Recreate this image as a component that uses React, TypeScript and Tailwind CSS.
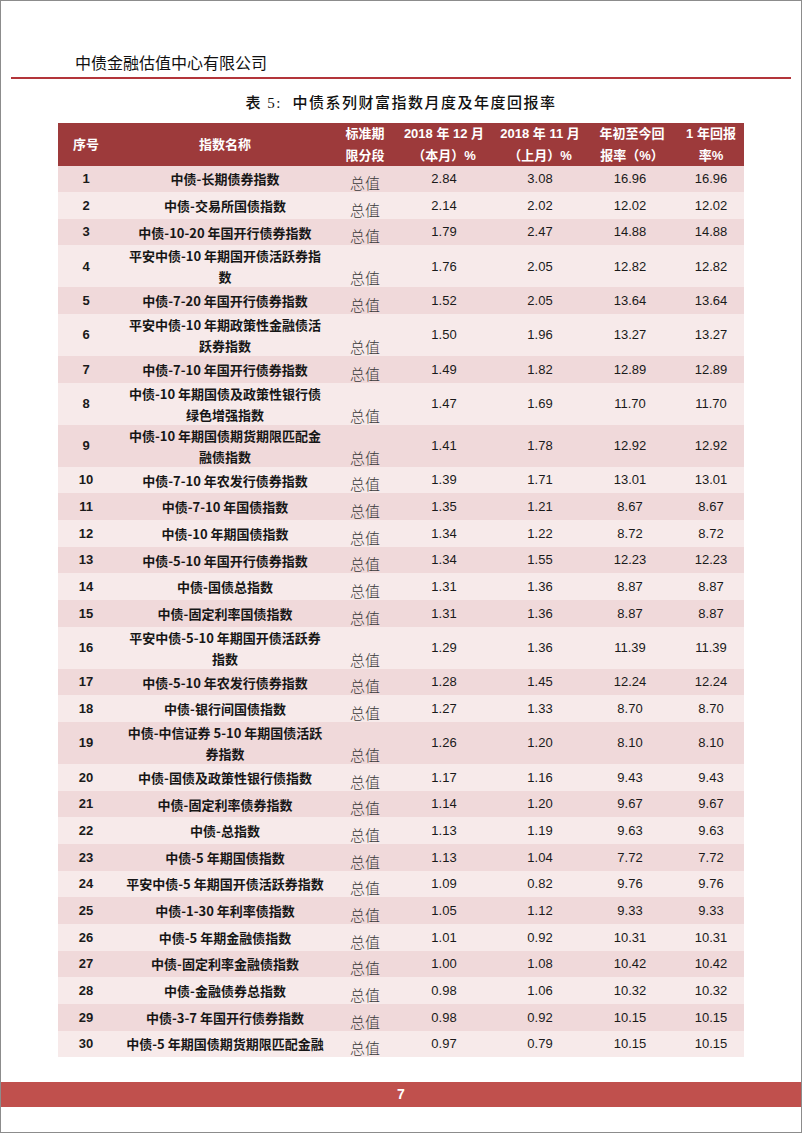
const rows: [string, string[], string, string, string, string][] = [
  ["1", ["中债-长期债券指数"], "2.84", "3.08", "16.96", "16.96"],
  ["2", ["中债-交易所国债指数"], "2.14", "2.02", "12.02", "12.02"],
  ["3", ["中债-10-20 年国开行债券指数"], "1.79", "2.47", "14.88", "14.88"],
  ["4", ["平安中债-10 年期国开债活跃券指", "数"], "1.76", "2.05", "12.82", "12.82"],
  ["5", ["中债-7-20 年国开行债券指数"], "1.52", "2.05", "13.64", "13.64"],
  ["6", ["平安中债-10 年期政策性金融债活", "跃券指数"], "1.50", "1.96", "13.27", "13.27"],
  ["7", ["中债-7-10 年国开行债券指数"], "1.49", "1.82", "12.89", "12.89"],
  ["8", ["中债-10 年期国债及政策性银行债", "绿色增强指数"], "1.47", "1.69", "11.70", "11.70"],
  ["9", ["中债-10 年期国债期货期限匹配金", "融债指数"], "1.41", "1.78", "12.92", "12.92"],
  ["10", ["中债-7-10 年农发行债券指数"], "1.39", "1.71", "13.01", "13.01"],
  ["11", ["中债-7-10 年国债指数"], "1.35", "1.21", "8.67", "8.67"],
  ["12", ["中债-10 年期国债指数"], "1.34", "1.22", "8.72", "8.72"],
  ["13", ["中债-5-10 年国开行债券指数"], "1.34", "1.55", "12.23", "12.23"],
  ["14", ["中债-国债总指数"], "1.31", "1.36", "8.87", "8.87"],
  ["15", ["中债-固定利率国债指数"], "1.31", "1.36", "8.87", "8.87"],
  ["16", ["平安中债-5-10 年期国开债活跃券", "指数"], "1.29", "1.36", "11.39", "11.39"],
  ["17", ["中债-5-10 年农发行债券指数"], "1.28", "1.45", "12.24", "12.24"],
  ["18", ["中债-银行间国债指数"], "1.27", "1.33", "8.70", "8.70"],
  ["19", ["中债-中信证券 5-10 年期国债活跃", "券指数"], "1.26", "1.20", "8.10", "8.10"],
  ["20", ["中债-国债及政策性银行债指数"], "1.17", "1.16", "9.43", "9.43"],
  ["21", ["中债-固定利率债券指数"], "1.14", "1.20", "9.67", "9.67"],
  ["22", ["中债-总指数"], "1.13", "1.19", "9.63", "9.63"],
  ["23", ["中债-5 年期国债指数"], "1.13", "1.04", "7.72", "7.72"],
  ["24", ["平安中债-5 年期国开债活跃券指数"], "1.09", "0.82", "9.76", "9.76"],
  ["25", ["中债-1-30 年利率债指数"], "1.05", "1.12", "9.33", "9.33"],
  ["26", ["中债-5 年期金融债指数"], "1.01", "0.92", "10.31", "10.31"],
  ["27", ["中债-固定利率金融债指数"], "1.00", "1.08", "10.42", "10.42"],
  ["28", ["中债-金融债券总指数"], "0.98", "1.06", "10.32", "10.32"],
  ["29", ["中债-3-7 年国开行债券指数"], "0.98", "0.92", "10.15", "10.15"],
  ["30", ["中债-5 年期国债期货期限匹配金融"], "0.97", "0.79", "10.15", "10.15"],
]

const cols = "grid grid-cols-[56px_222px_58px_100px_92px_92px_66px]"

function HeadCell({ lines }: { lines: string[] }) {
  return (
    <div className="flex flex-col items-center justify-center text-center leading-[22px]">
      {lines.map((l, i) => (
        <span key={i}>{l}</span>
      ))}
    </div>
  )
}

export default function App() {
  return (
    <div className="w-[802px] h-[1133px] border border-[#8c8c8c] bg-white flex flex-col font-['Liberation_Sans','Noto_Sans_CJK_SC',sans-serif] text-[#1a1a1a]">
      <div className="pt-[51px] pl-[74px] text-[16px] leading-[20px] font-['Noto_Sans_CJK_SC',sans-serif] text-[#111]">
        中债金融估值中心有限公司
      </div>
      <div className="mt-[5px] mx-[10px] h-[1.5px] bg-[#b3353a]" />

      <div className="mt-[14px] text-center text-[15px] leading-[20px] tracking-[1.5px] font-medium font-['Liberation_Serif','Noto_Sans_CJK_SC',serif] text-[#111]">
        表 5:&nbsp; 中债系列财富指数月度及年度回报率
      </div>

      <div className="mt-[10px] ml-[57px] w-[686px]">
        <div className={`${cols} h-[43px] bg-[#9d3a3b] text-white text-[13px] font-bold`}>
          <HeadCell lines={["序号"]} />
          <HeadCell lines={["指数名称"]} />
          <HeadCell lines={["标准期", "限分段"]} />
          <HeadCell lines={["2018 年 12 月", "（本月）%"]} />
          <HeadCell lines={["2018 年 11 月", "（上月）%"]} />
          <HeadCell lines={["年初至今回", "报率（%）"]} />
          <HeadCell lines={["1 年回报", "率%"]} />
        </div>

        {rows.map(([no, name, m12, m11, ytd, y1], i) => (
          <div
            key={no}
            className={`${cols} min-h-[26.67px] text-[13px] ${i % 2 === 0 ? "bg-[#f0d9da]" : "bg-[#f7eaea]"}`}
          >
            <div className="flex items-center justify-center font-bold">{no}</div>
            <div className="flex flex-col items-center justify-center text-center leading-[21px] font-bold font-['Noto_Sans_CJK_SC',sans-serif] text-[#161616]">
              {name.map((l, k) => (
                <span key={k} className="whitespace-nowrap">{l}</span>
              ))}
            </div>
            <div className="flex items-end justify-center">
              <span className="text-[15px] leading-[21px] font-light font-['Noto_Sans_CJK_SC',sans-serif] text-[#3a3a3a] translate-y-[1px]">
                总值
              </span>
            </div>
            <div className="flex items-center justify-center">{m12}</div>
            <div className="flex items-center justify-center">{m11}</div>
            <div className="flex items-center justify-center pr-[4px]">{ytd}</div>
            <div className="flex items-center justify-center">{y1}</div>
          </div>
        ))}
      </div>

      <div className="mt-auto mb-[25px] h-[25px] bg-[#c0504d] flex items-center justify-center text-white text-[14px] font-bold">
        7
      </div>
    </div>
  )
}
